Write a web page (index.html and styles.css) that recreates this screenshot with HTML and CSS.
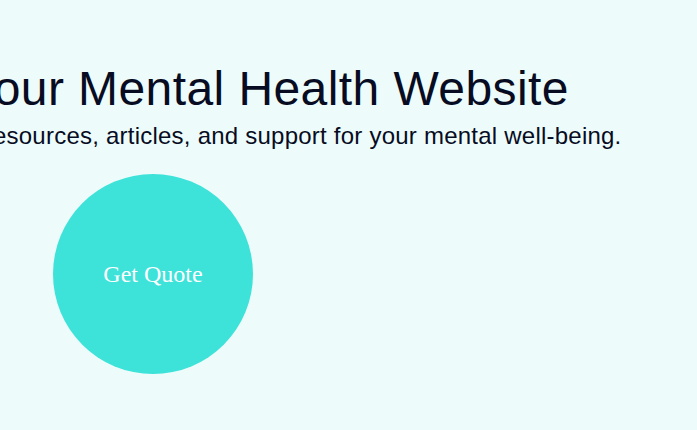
FILE: index.html
```html
<!DOCTYPE html>
<html lang="en">
<head>
<meta charset="utf-8">
<title>Your Mental Health Website</title>
<link rel="stylesheet" href="styles.css">
</head>
<body>
<main class="page">
  <section class="hero">
    <h1 class="hero-title">Welcome to Your Mental Health Website</h1>
    <p class="hero-sub">Welcome! Explore trusted resources, articles, and support for your mental well-being.</p>
  </section>
  <div class="cta">
    <button class="cta-button" type="button">Get Quote</button>
  </div>
</main>
</body>
</html>
```
FILE: styles.css
```css
html, body {
  margin: 0;
  padding: 0;
}
body {
  background: #edfcfb;
  width: 697px;
  height: 430px;
  overflow: hidden;
  font-family: "Liberation Sans", Arial, sans-serif;
  color: #070c23;
}
.page {
  display: flex;
  flex-direction: column;
  padding-top: 61px;
}
.hero {
  margin-left: -297px;
  white-space: nowrap;
}
.hero-title {
  margin: 0 0 0 -7px;
  font-size: 48px;
  font-weight: 400;
  line-height: 56px;
  letter-spacing: 0.42px;
}
.hero-sub {
  margin: 3px 0 0 -5px;
  font-size: 24px;
  line-height: 32px;
  letter-spacing: 0.23px;
}
.cta {
  display: flex;
  padding-top: 22px;
  padding-left: 53px;
}
.cta-button {
  width: 200px;
  height: 200px;
  border: none;
  border-radius: 50%;
  background: #3de2d9;
  color: #ffffff;
  font-family: "Liberation Serif", "Times New Roman", serif;
  font-size: 24px;
  padding: 0;
  display: flex;
  align-items: center;
  justify-content: center;
}
```
